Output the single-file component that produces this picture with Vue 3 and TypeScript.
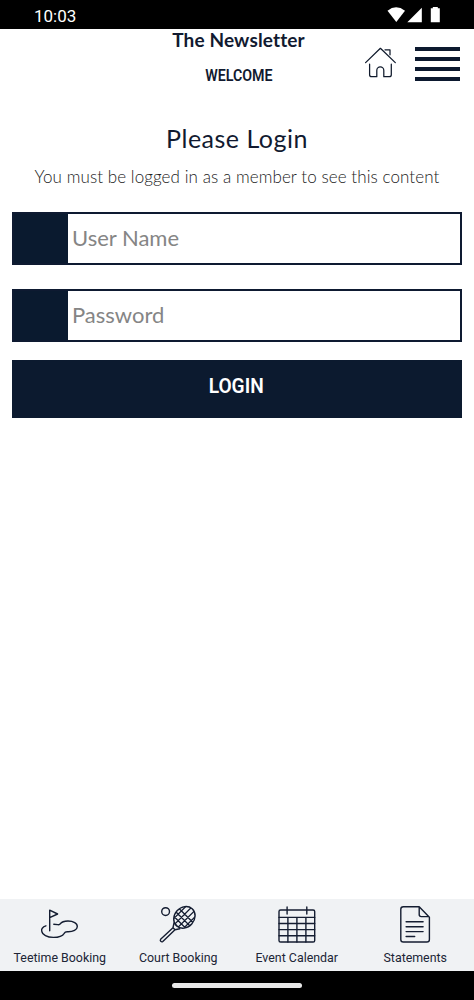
<script setup lang="ts">
import { ref } from 'vue'

interface Field {
  id: string
  label: string
  type: string
}

interface Tab {
  id: string
  label: string
}

const fields: Field[] = [
  { id: 'username', label: 'User Name', type: 'text' },
  { id: 'password', label: 'Password', type: 'password' },
]

const tabs: Tab[] = [
  { id: 'tee', label: 'Teetime Booking' },
  { id: 'court', label: 'Court Booking' },
  { id: 'calendar', label: 'Event Calendar' },
  { id: 'statements', label: 'Statements' },
]

const values = ref<Record<string, string>>({ username: '', password: '' })
</script>

<template>
  <div class="screen">
    <div class="status">
      <span class="clock">10:03</span>
      <svg class="status-icons" width="54" height="16" viewBox="0 0 54 16" fill="#fff">
        <path d="M.5 3.7Q9-3.1 18 3.7L9.3 15z" />
        <path d="M20.3 15.3 34.8.8v14.5z" />
        <path d="M43.8 1.3h2V0h5v1.3h2v14h-9z" />
      </svg>
    </div>

    <header class="header">
      <div class="titles">
        <h1 class="club"><span>The Newsletter</span></h1>
        <div class="welcome"><span>WELCOME</span></div>
      </div>
      <div class="actions">
        <svg width="32" height="31" viewBox="0 0 32 31" fill="none" stroke="#101a2c" stroke-width="1.25" stroke-linecap="round" stroke-linejoin="round">
          <path d="M.6 15.6 15.4 1.3 30.3 15.6" />
          <path d="M20 2.8h5v5" />
          <path d="M4.6 17.2v10.5q0 2 2 2h5.2v-6.3a3.5 3.5 0 0 1 7 0v6.3h5.5q2 0 2-2V17.2" />
        </svg>
        <div class="menu"><i v-for="n in 4" :key="n" /></div>
      </div>
    </header>

    <main class="main">
      <h2 class="heading"><span>Please Login</span></h2>
      <p class="note"><span>You must be logged in as a member to see this content</span></p>
      <label v-for="f in fields" :key="f.id" class="field">
        <span class="block" />
        <input v-model="values[f.id]" :type="f.type" :placeholder="f.label" />
      </label>
      <button class="login" type="button"><span>LOGIN</span></button>
    </main>

    <nav class="tabs">
      <a v-for="t in tabs" :key="t.id" class="tab">
        <svg width="40" height="40" viewBox="0 0 40 40" fill="none" stroke="#141d31" stroke-width="1.4" stroke-linecap="round" stroke-linejoin="round">
          <g v-if="t.id === 'tee'" transform="translate(-.6 0)">
            <path d="M10.3 25.8V5.2L18.2 9l-7.9 3.7" />
            <path d="M6.5 20.8C3.2 22 1.9 24 2.3 26c.5 3.8 5.5 6.4 11.7 6.4 5.6 0 9.3-1.6 10.8-4.1.7-1.3 1.2-1.6 3.2-1.5 6 .2 9.7-2.1 9.9-5.1.2-3.5-4-5.7-9.3-5.7-4.2 0-6.5 1.1-7.8 2.9-.5.9-1.4.9-2.5.7-1.4-.3-2.4-.4-3.9-.4" />
          </g>
          <template v-else-if="t.id === 'court'">
            <defs>
              <clipPath id="racket-head">
                <ellipse cx="26.4" cy="12.4" rx="9.9" ry="11.6" transform="rotate(42 26.4 12.4)" />
              </clipPath>
            </defs>
            <circle cx="7.6" cy="6.6" r="3.9" />
            <ellipse cx="26.4" cy="12.4" rx="9.9" ry="11.6" transform="rotate(42 26.4 12.4)" />
            <path d="M16 18 15 22.7 2.6 34.3q-.7 1 .2 2 1 1 2 .2L17 24.8l4.8-1M15 22.7l2 2.1" />
            <path clip-path="url(#racket-head)" d="m-4.5-2.5 40 40M2-2.5l40 40M8.5-2.5l40 40M15-2.5l40 40M8.8 20.5l30-30M8.8 27l30-30M8.8 33.5l30-30M8.8 40l30-30" stroke-width="1.3" />
          </template>
          <template v-else-if="t.id === 'calendar'">
            <rect x="2" y="5" width="35.7" height="32" rx="1.6" />
            <path d="M10.1 2v7M29.8 2v7M2 12.4h35.7M2 18.5h35.7M2 24.6h35.7M2 30.7h35.7M10.9 12.4V37M19.9 12.4V37M28.9 12.4V37" />
          </template>
          <g v-else transform="translate(.9 0)">
            <path d="M7.5 1.7h15.8l10.2 10.5v22.2q0 2.6-2.6 2.6H7.5q-2.6 0-2.6-2.6V4.3q0-2.6 2.6-2.6zM23.3 1.7v7.9q0 2 2 2h7.6" />
            <path d="M10.2 16.8h17M10.2 21.7h17M10.2 26.6h17M10.2 31.5h8.6" />
          </g>
        </svg>
        <span>{{ t.label }}</span>
      </a>
    </nav>
    <div class="gesture"><i /></div>
  </div>
</template>

<style>
body {
  margin: 0;
}
</style>

<style scoped>
.screen {
  width: 474px;
  height: 1000px;
  display: flex;
  flex-direction: column;
  overflow: hidden;
  background: #fff;
  color: #111a30;
  font-family: Lato, 'Open Sans', sans-serif;
}
h1,
h2,
p {
  margin: 0;
  font-weight: 400;
}
h1 span,
h2 span,
p span,
.welcome span,
.login span {
  display: inline-block;
  white-space: nowrap;
}
.status {
  height: 29px;
  box-sizing: border-box;
  padding: 7px 33px 0 34px;
  display: flex;
  justify-content: space-between;
  background: #000;
}
.clock {
  font: 17px/18px Roboto, sans-serif;
  color: #fff;
}
.header {
  height: 91px;
  display: grid;
  grid-template-columns: 1fr 134px 1fr;
}
.titles {
  grid-column: 2;
  display: flex;
  flex-direction: column;
  align-items: center;
}
.club {
  margin-left: 3px;
  font-size: 19px;
  font-weight: 700;
  line-height: 22px;
  letter-spacing: 0.15px;
}
.welcome {
  margin: 14px 0 0 4px;
  font: 600 16px/21px Roboto, sans-serif;
}
.welcome span {
  transform: scaleX(0.89);
}
.actions {
  display: flex;
  justify-content: flex-end;
  gap: 18px;
  padding: 18px 14px 0 0;
}
.menu {
  width: 45px;
  height: 34px;
  display: flex;
  flex-direction: column;
  justify-content: space-between;
}
.menu i {
  height: 4px;
  background: #0c192f;
}
.main {
  flex: 1;
  padding: 0 12px;
  display: flex;
  flex-direction: column;
}
.heading {
  text-align: center;
  font-size: 25px;
  line-height: 36px;
  letter-spacing: 0.5px;
}
.note {
  margin: 9px 0 23px;
  text-align: center;
  font-size: 17px;
  font-weight: 300;
  line-height: 24px;
  letter-spacing: 0.08px;
  color: #222;
}
.field {
  height: 53px;
  box-sizing: border-box;
  margin-bottom: 24px;
  display: flex;
  border: 2px solid #0e1a31;
}
.field + .login {
  margin-top: -6px;
}
.block {
  width: 54px;
  background: #0a1a2f;
}
input {
  flex: 1;
  min-width: 0;
  padding: 0 4px 1px;
  border: 0;
  outline: 0;
  background: #fff;
  font: 22px/48px Lato, sans-serif;
  color: #111a30;
}
input::placeholder {
  color: #858585;
  opacity: 1;
}
.login {
  height: 58px;
  padding: 0 2px 6px 0;
  border: 0;
  background: #0c1a2f;
  color: #fff;
  font: 600 21px/24px Roboto, sans-serif;
}
.login span {
  transform: scaleX(0.91);
}
.tabs {
  height: 72px;
  display: grid;
  grid-template-columns: repeat(4, 118.5px);
  background: #f0f2f4;
}
.tab {
  display: flex;
  flex-direction: column;
  align-items: center;
  padding: 5.5px 0 0 1px;
  color: #202536;
  font: 12.4px/16px Roboto, sans-serif;
}
.tab span {
  margin-top: 5px;
}
.gesture {
  height: 29px;
  display: flex;
  justify-content: center;
  align-items: center;
  background: #000;
}
.gesture i {
  width: 130px;
  height: 5px;
  border-radius: 3px;
  background: #e8e8e8;
}
</style>
